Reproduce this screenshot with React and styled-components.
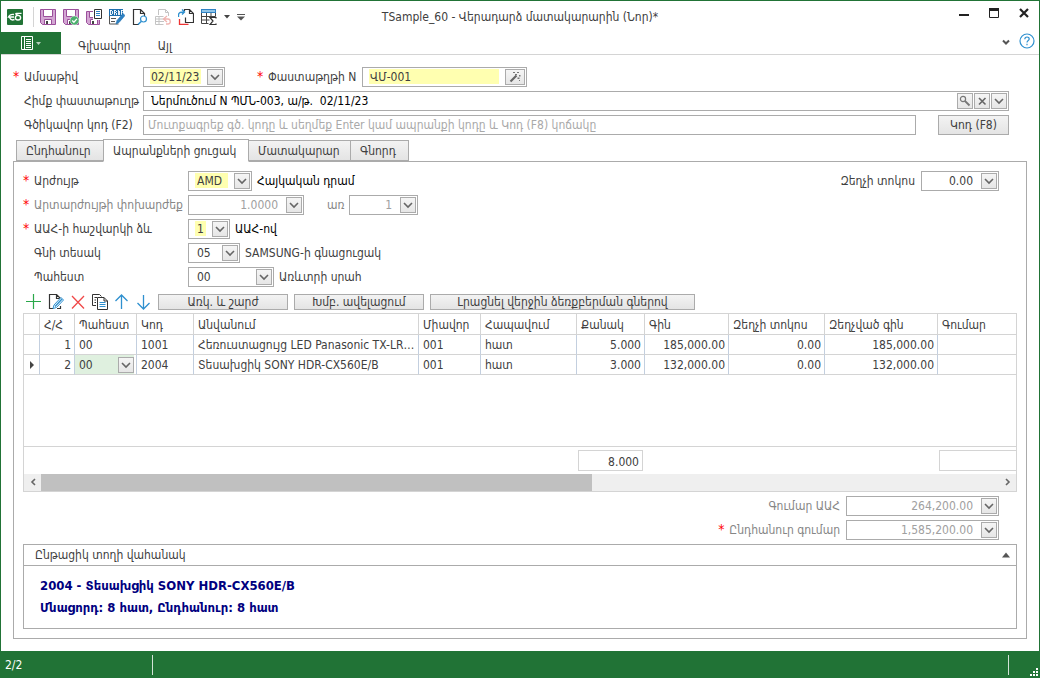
import React, { useState } from 'react';
import styled, { createGlobalStyle, css } from 'styled-components';

const GlobalStyle = createGlobalStyle`
  * {
    box-sizing: border-box;
  }
  body {
    margin: 0;
    background: #fff;
  }
  body, button, input, select, table {
    font-family: 'DejaVu Sans Condensed', 'DejaVu Sans', sans-serif;
    font-size: 12px;
    line-height: 16px;
    color: #404040;
  }
`;

const green = '#217336';
const border = '#ababab';
const line = '#d4d4d4';

// Window frame
const Window = styled.div`
  display: flex;
  flex-direction: column;
  min-height: 100vh;
  border: 1px solid ${green};
  border-bottom: 0;
`;

const TitleBar = styled.header`
  display: grid;
  grid-template-columns: 1fr auto 1fr;
  align-items: center;
  height: 31px;
`;

const QuickAccess = styled.div`
  display: flex;
  align-items: center;
  gap: 7px;
  padding-left: 6px;
`;

const Divider = styled.span`
  width: 1px;
  height: 20px;
  margin: 0 -1px 0 3px;
  background: ${line};
`;

const IconButton = styled.button`
  display: flex;
  align-items: center;
  justify-content: center;
  flex: none;
  width: ${({ $w }) => $w || 16}px;
  height: 16px;
  padding: 0;
  border: 0;
  background: none;
`;

const Title = styled.h1`
  margin: 0;
  font-size: 12px;
  font-weight: normal;
  line-height: 16px;
`;

const WindowButtons = styled.div`
  display: flex;
  justify-content: flex-end;
  gap: 14px;
  padding: 0 7px 7px 0;
`;

const Ribbon = styled.nav`
  display: flex;
  align-items: center;
  height: 23px;
  border-bottom: 1px solid ${line};
`;

const FileButton = styled.button`
  display: flex;
  align-items: center;
  justify-content: center;
  width: 60px;
  height: 22px;
  padding: 0;
  border: 0;
  background: ${green};
`;

const RibbonTab = styled.button`
  height: 22px;
  padding: 5px 0 0;
  margin-left: ${({ $gap }) => $gap}px;
  border: 0;
  background: none;
`;

const RibbonRight = styled.div`
  display: flex;
  gap: 5px;
  margin: 0 4px 4px auto;
`;

const Body = styled.main`
  display: flex;
  flex: 1;
  flex-direction: column;
  padding: 12px;
`;

// Form parts
const Rows = styled.div`
  display: flex;
  flex-direction: column;
  gap: 4px;
  padding-right: ${({ $right }) => $right || 0}px;
`;

const Row = styled.div`
  display: flex;
  align-items: center;
  justify-content: ${({ $end }) => ($end ? 'flex-end' : 'flex-start')};
  height: 20px;
`;

const Label = styled.label`
  flex: none;
  width: ${({ $w }) => ($w ? `${$w}px` : 'auto')};
  padding-left: 11px;
  white-space: nowrap;
  color: ${({ $muted }) => ($muted ? '#868686' : '#404040')};
  margin-right: ${({ $gap }) => $gap || 0}px;
  margin-left: ${({ $left }) => $left || 0}px;
  ${({ $required }) =>
    $required &&
    css`
      padding-left: 0;
      &::before {
        content: '*';
        display: inline-block;
        width: 11px;
        font-size: 14px;
        line-height: 12px;
        color: #f00;
      }
    `}
`;

const Note = styled.span`
  margin-left: 5px;
  color: ${({ $dark }) => ($dark ? '#000' : '#404040')};
  white-space: nowrap;
`;

const Spacer = styled.span`
  flex: 1;
`;

const Field = styled.span`
  display: flex;
  flex: ${({ $w }) => ($w ? 'none' : '1')};
  gap: 1px;
  width: ${({ $w }) => ($w ? `${$w}px` : 'auto')};
  height: 20px;
  padding: 1px;
  border: 1px solid ${border};
  background: #fff;
`;

const valueStyle = css`
  flex: 1;
  min-width: 0;
  height: 15px;
  margin: 0 5px 0 ${({ $plain }) => ($plain ? 2 : 5)}px;
  padding: 1px ${({ $right }) => ($right ? 2 : 0)}px 0 1px;
  border: 0;
  outline: 0;
  border-radius: 0;
  line-height: 14px;
  appearance: none;
  background: ${({ $required }) => ($required ? '#ffffb0' : 'transparent')};
  text-align: ${({ $right }) => ($right ? 'right' : 'left')};
  color: ${({ $muted, $dark }) => ($muted ? '#a0a0a0' : $dark ? '#000' : '#404040')};
  opacity: 1;
  &::placeholder {
    color: #a9a9a9;
  }
`;

const Input = styled.input`
  ${valueStyle}
`;

const Select = styled.select`
  ${valueStyle}
  padding-left: 2px;
`;

const FieldButton = styled.button`
  display: flex;
  align-items: center;
  justify-content: center;
  flex: none;
  width: ${({ $w }) => $w || 16}px;
  height: 16px;
  padding: 0;
  border: 1px solid ${border};
  background: linear-gradient(#f5f5f5, #e6e6e6);
`;

const PushButton = styled.button`
  flex: none;
  width: ${({ $w }) => $w}px;
  height: ${({ $h }) => $h || 16}px;
  margin-left: ${({ $left }) => $left || 0}px;
  padding: 0;
  border: 1px solid ${border};
  background: linear-gradient(#f3f3f3, #e4e4e4);
  line-height: 14px;
  white-space: nowrap;
`;

// Page tabs
const Tabs = styled.div`
  display: flex;
  align-items: flex-end;
  height: 23px;
  margin: 4px 0 -1px 3px;
`;

const Tab = styled.button`
  height: ${({ $active }) => ($active ? 23 : 21)}px;
  width: ${({ $w }) => $w}px;
  margin-bottom: ${({ $active }) => ($active ? 0 : 1)}px;
  margin-left: ${({ $active }) => ($active ? -1 : 0)}px;
  padding: 0 0 0 9px;
  border: 1px solid ${border};
  border-left-width: ${({ $first, $active }) => ($first || $active ? 1 : 0)}px;
  border-bottom-color: ${({ $active }) => ($active ? '#fff' : border)};
  background: ${({ $active }) => ($active ? '#fff' : 'linear-gradient(#f3f3f3, #e4e4e4)')};
  text-align: left;
  white-space: nowrap;
  z-index: 1;
`;

const Panel = styled.section`
  display: flex;
  flex: 1;
  flex-direction: column;
  padding: 9px;
  border: 1px solid ${border};
`;

const Toolbar = styled.div`
  display: flex;
  gap: 6px;
  margin: 7px 0 3px 3px;
`;

// Items grid
const Grid = styled.div`
  display: flex;
  flex: 1;
  flex-direction: column;
  min-height: 160px;
  border: 1px solid ${line};
`;

const Table = styled.table`
  width: 100%;
  table-layout: fixed;
  border-collapse: separate;
  border-spacing: 0;
`;

const Col = styled.col`
  width: ${({ $w }) => ($w ? `${$w}px` : 'auto')};
`;

const Th = styled.th`
  height: 21px;
  padding: 1px 4px 0;
  border-right: 1px solid ${line};
  border-bottom: 1px solid ${line};
  font-weight: normal;
  text-align: left;
  white-space: nowrap;
  &:last-child {
    border-right: 0;
  }
`;

const Td = styled.td`
  height: 20px;
  padding: 0 ${({ $right }) => ($right ? 3 : 2)}px 0 4px;
  border-right: 1px solid #c3cfdf;
  border-bottom: 1px solid ${line};
  text-align: ${({ $right }) => ($right ? 'right' : 'left')};
  overflow: hidden;
  text-overflow: ellipsis;
  white-space: nowrap;
  &:last-child {
    border-right: 0;
  }
`;

const EditCell = styled(Td)`
  padding: 0;
`;

const MarkerCell = styled(Td)`
  padding: 0 0 0 5px;
  & > svg {
    display: block;
  }
`;

const CellEditor = styled.div`
  display: flex;
  align-items: center;
  height: 19px;
  margin-right: 2px;
  background: #dff0df;
`;

const CellSelect = styled.select`
  flex: 1;
  min-width: 0;
  padding: 0 0 0 4px;
  border: 0;
  background: transparent;
  appearance: none;
`;

const Summary = styled.div`
  display: grid;
  grid-template-columns: 554px 65px 296px 1fr;
  align-items: start;
  height: 28px;
  margin-top: auto;
  padding-top: 3px;
  border-top: 1px solid ${line};
`;

const Total = styled.output`
  grid-column: ${({ $col }) => $col};
  height: 21px;
  padding: 3px 3px 0;
  border: 1px solid ${line};
  border-right-width: ${({ $col }) => ($col === 4 ? 0 : 1)}px;
  text-align: right;
`;

const ScrollBar = styled.div`
  display: flex;
  height: 17px;
  background: #efefef;
`;

// visible columns against the scrolled ones
const Track = styled.div`
  display: grid;
  flex: 1;
  grid-template-columns: 23fr 17fr;
`;

const Thumb = styled.div`
  background: #c0c0c0;
`;

const Totals = styled(Rows)`
  margin: 4px 0;
`;

const Group = styled.section`
  border: 1px solid ${border};
`;

const GroupHeader = styled.header`
  display: flex;
  align-items: center;
  justify-content: space-between;
  height: 21px;
  padding: 0 2px 0 11px;
  border-bottom: 1px solid ${border};
`;

const GroupBody = styled.div`
  padding: 9px 16px;
  font-size: 13px;
  font-weight: bold;
  line-height: 22px;
  color: #000080;
`;

const StatusBar = styled.footer`
  display: flex;
  align-items: center;
  justify-content: space-between;
  height: 27px;
  margin: 0 -1px;
  background: ${green};
  color: #fff;
`;

const StatusCell = styled.span`
  width: ${({ $w }) => $w}px;
  height: 20px;
  padding: 2px 5px;
  border-right: ${({ $last }) => ($last ? 0 : '1px solid #d3e3d7')};
  border-left: ${({ $last }) => ($last ? '1px solid #d3e3d7' : 0)};
`;

const Grip = styled.svg`
  display: block;
  margin: 11px 0 0 16px;
`;

// Icons
const Svg = ({ size = 16, w, h, children }) => (
  <svg
    width={w || size}
    height={h || size}
    viewBox={`0 0 ${w || size} ${h || size}`}
    fill="none"
    aria-hidden="true"
  >
    {children}
  </svg>
);

const Chevron = ({ d = 'M1 3l4 4 4-4' }) => (
  <Svg size={10}>
    <path d={d} stroke="#666" strokeWidth="1.6" />
  </Svg>
);

const Caret = () => (
  <Svg w={6} h={4}>
    <path d="M0 0h6L3 3.5z" fill="#444" />
  </Svg>
);

const Logo = () => (
  <Svg>
    <rect width="16" height="16" rx="1" fill={green} />
    <path d="M7 5.5C4.500 5 2.500 6 1.500 8h5.500M2.500 8.500c1 2.300 3 2.800 5 2" stroke="#fff" strokeWidth="1.4" />
    <ellipse cx="11" cy="8.700" rx="2.600" ry="2.300" stroke="#fff" strokeWidth="1.4" />
    <path d="M14.500 4.300H9.500c-1 0-1 1 0 1.300l2 1" stroke="#fff" strokeWidth="1.3" />
  </Svg>
);

const Floppy = ({ children }) => (
  <Svg>
    <path d="M.5.5h15v15H2.5l-2-2z" fill="#d3a6d3" stroke="#9b4f9b" />
    <path d="M3.5.5h9v7h-9z" fill="#fff" stroke="#9b4f9b" />
    <path d="M4.5 10.500h7v5h-7z" fill="#fff" stroke="#9b4f9b" />
    <path d="M6 12h2v3H6z" fill="#444" />
    {children}
  </Svg>
);

const SaveCheck = () => (
  <Floppy>
    <circle cx="11.5" cy="11.5" r="4.5" fill="#4caf6e" stroke="#fff" strokeWidth=".5" />
    <path d="M9.2 11.5l1.7 1.8 3-3.4" stroke="#fff" strokeWidth="1.3" />
  </Floppy>
);

const SaveNew = () => (
  <Svg>
    <path d="M.5 2.5h13v13h-11l-2-2z" fill="#d3a6d3" stroke="#9b4f9b" />
    <path d="M3.5 2.5h4v6h-4zM4.5 10.5h7v5h-7z" fill="#fff" stroke="#9b4f9b" />
    <path d="M6 12h2v3H6z" fill="#444" />
    <path d="M7 0h9v11H7z" fill="#fff" />
    <path d="M8.5.5h7v9h-7z" fill="#fff" stroke="#333" />
    <path d="M10 2.5h4M10 4.5h4M10 6.5h4" stroke="#2f82c3" />
  </Svg>
);

const Draft = () => (
  <Svg>
    <path d="M0 0h14v7H0z" fill="#1f6fae" />
    <path
      d="M1.5 1v5M1 1.500h2M1 5.500h2M3.500 2v3M5.500 1v5M5 1.500h2M5 3.500h2M7.500 2v1M7.500 4v2M9.500 2v4M9 1.500h1M10.500 2v4M12.500 1v5M12 1.500h2M12 3.500h1.500"
      stroke="#fff"
      strokeWidth=".9"
    />
    <path d="M.5 7v8h9M2 9.5h5M2 12.5h4" stroke="#555" />
    <path d="M8 11.5l6-7 2 2-6 7-3 1.5z" fill="#2f82c3" stroke="#1f6fae" strokeWidth=".6" />
  </Svg>
);

const Preview = () => (
  <Svg>
    <path d="M7 15.5H1.5V.5h7l4 4v3M8.5.5v4h4" stroke="#333" strokeWidth="1.2" />
    <circle cx="11.5" cy="10" r="3" fill="#fff" stroke="#2f90cf" strokeWidth="1.2" />
    <path d="M9.5 12.2L6 15.5" stroke="#2f90cf" strokeWidth="1.5" />
  </Svg>
);

const Undo = () => (
  <Svg>
    <path
      d="M3.5 6V.5h7l3 3V7M10.5.5v3h3M.5 7.5h8M.5 7.5v8h8M1 10h8M1 12.500h8M4 8v7"
      stroke="#c4c4c4"
    />
    <path d="M12 7l-3.500 3 3.500 3M9 10h4c3 0 3 5 0 5h-2" stroke="#f0b4b0" strokeWidth="1.3" />
  </Svg>
);

const Transfer = () => (
  <Svg>
    <path d="M6.5 2V.5h5l4 4v9h-8v-5M11.5.5v4h4" stroke="#333" strokeWidth="1.2" />
    <path d="M.5 8V6C.5 3.500 2 3 6 3M4 .5L6.500 3 4 5.500" stroke="#2f90cf" strokeWidth="1.4" />
    <path d="M1.500 10v5.500h9" stroke="#e33" strokeWidth="1.3" />
  </Svg>
);

const TableSum = () => (
  <Svg>
    <path d="M0 0h15v4H0z" fill="#2f82c3" />
    <path d="M1 1h13v2H1z" fill="#8fc4e8" />
    <path d="M.5 4v10.500h7M.5 7.500h14V4M.5 11h8M5.500 4v10.500M10 4v4" stroke="#444" />
    <path d="M15 9.500v-1H9l3 3.500-3 3.500h6v-1" stroke="#333" strokeWidth="1.2" />
  </Svg>
);

const Wand = () => (
  <Svg size={14}>
    <path d="M2.5 11.5l6-6" stroke="#666" strokeWidth="2.2" />
    <path
      d="M5 2h2v1H5zM9 2h2v1H9zM7 4h2v1H7zM11 5h1.500v1.500H11zM9.500 7.500h2V9h-2zM11 10h1v1h-1z"
      fill="#777"
    />
  </Svg>
);

const Search = () => (
  <Svg size={12}>
    <circle cx="4" cy="4" r="2.6" stroke="#777" strokeWidth="1.2" />
    <path d="M6 6l4.500 4.500" stroke="#777" strokeWidth="1.8" />
  </Svg>
);

const Cross = () => (
  <Svg size={10}>
    <path d="M2 2l6.500 6.500M8.500 2L2 8.500" stroke="#666" strokeWidth="1.6" />
  </Svg>
);

const Plus = () => (
  <Svg>
    <path d="M0 7.5h15M7.5 0v15" stroke="#2aa84a" strokeWidth="1.2" />
  </Svg>
);

const Edit = () => (
  <Svg>
    <path d="M5 14.5H1.5V.5h7l4 4M8.5.5v4h3M9 14.5h3.500V12" stroke="#333" strokeWidth="1.2" />
    <path d="M5 14.5l1-3.500 7-7.500 2.500 2.500-7 7.500z" fill="#fff" stroke="#2f90cf" />
    <path d="M7 12.5L14 5" stroke="#2f90cf" strokeWidth="1.4" />
  </Svg>
);

const Delete = () => (
  <Svg>
    <path d="M2 2l12 12.500M14 2L2 14.500" stroke="#f04848" strokeWidth="1.3" />
  </Svg>
);

const Copy = () => (
  <Svg>
    <path d="M4 11.5H.5V.5h7l2 2M2.5 3.500H5M2.5 6H4M2.5 8.500H4" stroke="#333" />
    <path d="M5.5 3.500H12l3.500 3.500v8.500h-10zM12 3.500V7h3.500" fill="#fff" stroke="#333" />
    <path d="M7.5 8.500h6M7.5 10.500h6M7.5 12.500h6" stroke="#2f90cf" />
  </Svg>
);

const Arrow = ({ down }) => (
  <Svg>
    <path
      d={down ? 'M7.5 1v14M1.500 9l6 6 6-6' : 'M7.5 15V1M1.500 7l6-6 6 6'}
      stroke="#2f90cf"
      strokeWidth="1.3"
    />
  </Svg>
);

const quickActions = [
  ['Գրանցել', Floppy],
  ['Գրանցել և փակել', SaveCheck],
  ['Գրանցել և նոր', SaveNew],
  ['Սևագիր', Draft],
  ['Դիտել', Preview],
  ['Հետ', Undo],
  ['Տեղափոխել', Transfer],
  ['Աղյուսակ', TableSum],
];

const tabs = [
  { name: 'Ընդհանուր', width: 88 },
  { name: 'Ապրանքների ցուցակ', width: 146 },
  { name: 'Մատակարար', width: 102 },
  { name: 'Գնորդ', width: 58 },
];

const columns = [
  { title: '', width: 16 },
  { title: 'Հ/Հ', width: 35 },
  { title: 'Պահեստ', width: 62 },
  { title: 'Կոդ', width: 57 },
  { title: 'Անվանում', width: 225 },
  { title: 'Միավոր', width: 62 },
  { title: 'Հապավում', width: 96 },
  { title: 'Քանակ', width: 68 },
  { title: 'Գին', width: 84 },
  { title: 'Զեղչի տոկոս', width: 96 },
  { title: 'Զեղչված գին', width: 113 },
  { title: 'Գումար' },
];

const items = [
  { store: '00', code: '1001', name: 'Հեռուստացույց LED Panasonic TX-LR32', unit: '001', short: 'հատ', qty: '5.000', price: '185,000.00', discount: '0.00', final: '185,000.00' },
  { store: '00', code: '2004', name: 'Տեսախցիկ SONY HDR-CX560E/B', unit: '001', short: 'հատ', qty: '3.000', price: '132,000.00', discount: '0.00', final: '132,000.00' },
];

const DropInput = ({ id, width, value, ...rest }) => (
  <Field $w={width}>
    <Input id={id} defaultValue={value} {...rest} />
    <FieldButton type="button" aria-label="Բացել">
      <Chevron />
    </FieldButton>
  </Field>
);

const DropSelect = ({ id, width, value, required }) => (
  <Field $w={width}>
    <Select id={id} $required={required} defaultValue={value}>
      <option>{value}</option>
    </Select>
    <FieldButton as="span" aria-hidden="true">
      <Chevron />
    </FieldButton>
  </Field>
);

const App = () => {
  const [activeTab, setActiveTab] = useState(1);
  const [current, setCurrent] = useState(1);

  return (
    <>
      <GlobalStyle />
      <Window>
        <TitleBar>
          <QuickAccess>
            <Logo />
            <Divider />
            {quickActions.map(([name, Icon]) => (
              <IconButton key={name} aria-label={name}>
                <Icon />
              </IconButton>
            ))}
            <IconButton $w={6} aria-label="Ավելին">
              <Caret />
            </IconButton>
            <IconButton $w={8} aria-label="Կարգավորել">
              <Svg size={8}>
                <path d="M0 1h8v1H0zM0 3.500h8L4 7.500z" fill="#555" />
              </Svg>
            </IconButton>
          </QuickAccess>
          <Title>TSample_60 - Վերադարձ մատակարարին (Նոր)*</Title>
          <WindowButtons>
            <IconButton aria-label="Ծալել">
              <Svg>
                <path d="M3 10h10" stroke="#222" strokeWidth="2" />
              </Svg>
            </IconButton>
            <IconButton aria-label="Մեծացնել">
              <Svg>
                <path d="M3.5 3.5h9v9h-9z" stroke="#222" />
                <path d="M3 3h10v3H3z" fill="#222" />
              </Svg>
            </IconButton>
            <IconButton aria-label="Փակել">
              <Svg>
                <path d="M4 4l8 8M12 4l-8 8" stroke="#222" strokeWidth="2.2" />
              </Svg>
            </IconButton>
          </WindowButtons>
        </TitleBar>
        <Ribbon>
          <FileButton aria-label="Ցանկ">
            <Svg w={20} h={14}>
              <path d="M.5.5h11v13H.5zM3.500 0v14" stroke="#fff" />
              <path d="M5 3.5h5M5 5.5h5M5 7.5h5M5 9.5h5M5 11.5h5" stroke="#fff" />
              <path d="M15 6h5l-2.500 3z" fill="#b5cfbc" />
            </Svg>
          </FileButton>
          <RibbonTab $gap={17}>Գլխավոր</RibbonTab>
          <RibbonTab $gap={27}>Այլ</RibbonTab>
          <RibbonRight>
            <IconButton aria-label="Ծալել ժապավենը">
              <Svg size={10}>
                <path d="M2 4.500l3 3 3-3" stroke="#555" strokeWidth="2" />
              </Svg>
            </IconButton>
            <IconButton aria-label="Օգնություն">
              <Svg>
                <circle cx="8" cy="8" r="7" stroke="#2f90cf" strokeWidth="1.2" />
                <path
                  d="M5.8 6.3c0-3 4.400-3 4.400-.3 0 1.500-2.200 1.500-2.200 3.500M8 10.800v1.400"
                  stroke="#2f90cf"
                  strokeWidth="1.2"
                />
              </Svg>
            </IconButton>
          </RibbonRight>
        </Ribbon>
        <Body>
          <Rows $right={18}>
            <Row>
              <Label htmlFor="date" $w={130} $required>Ամսաթիվ</Label>
              <DropInput id="date" width={82} value="02/11/23" $required />
              <Label htmlFor="number" $w={105} $left={32} $required>Փաստաթղթի N</Label>
              <Field $w={165}>
                <Input id="number" defaultValue="ՎՄ-001" $required />
                <FieldButton $w={20} aria-label="Համարակալել">
                  <Wand />
                </FieldButton>
              </Field>
            </Row>
            <Row>
              <Label htmlFor="basis" $w={130}>Հիմք փաստաթուղթ</Label>
              <Field>
                <Input id="basis" defaultValue="Ներմուծում N ՊՄՆ-003, ա/թ.  02/11/23" $dark />
                <FieldButton aria-label="Փնտրել"><Search /></FieldButton>
                <FieldButton aria-label="Մաքրել"><Cross /></FieldButton>
                <FieldButton aria-label="Բացել"><Chevron /></FieldButton>
              </Field>
            </Row>
            <Row>
              <Label htmlFor="barcode" $w={130}>Գծիկավոր կոդ (F2)</Label>
              <Field>
                <Input
                  id="barcode"
                  $plain
                  placeholder="Մուտքագրեք գծ. կոդը և սեղմեք Enter կամ ապրանքի կոդը և Կոդ (F8) կոճակը"
                />
              </Field>
              <PushButton $w={71} $h={20} $left={22}>Կոդ (F8)</PushButton>
            </Row>
          </Rows>
          <Tabs role="tablist">
            {tabs.map((tab, i) => (
              <Tab
                key={tab.name}
                role="tab"
                aria-selected={i === activeTab}
                $active={i === activeTab}
                $first={i === 0}
                $w={tab.width}
                onClick={() => setActiveTab(i)}
              >
                {tab.name}
              </Tab>
            ))}
          </Tabs>
          <Panel>
            <Rows $right={18}>
              <Row>
                <Label htmlFor="currency" $w={165} $required>Արժույթ</Label>
                <DropSelect id="currency" width={64} value="AMD" required />
                <Note $dark>Հայկական դրամ</Note>
                <Spacer />
                <Label htmlFor="discount" $gap={6}>Զեղչի տոկոս</Label>
                <DropInput id="discount" width={78} value="0.00" $right />
              </Row>
              <Row>
                <Label htmlFor="rate" $w={165} $required $muted>Արտարժույթի փոխարժեք</Label>
                <DropInput id="rate" width={116} value="1.0000" readOnly $right $muted />
                <Label htmlFor="per" $w={33} $left={12} $muted>առ</Label>
                <DropInput id="per" width={69} value="1" readOnly $right $muted />
              </Row>
              <Row>
                <Label htmlFor="vat" $w={165} $required>ԱԱՀ-ի հաշվարկի ձև</Label>
                <DropSelect id="vat" width={42} value="1" required />
                <Note $dark>ԱԱՀ-ով</Note>
              </Row>
              <Row>
                <Label htmlFor="priceType" $w={165}>Գնի տեսակ</Label>
                <DropSelect id="priceType" width={52} value="05" />
                <Note>SAMSUNG-ի գնացուցակ</Note>
              </Row>
              <Row>
                <Label htmlFor="store" $w={165}>Պահեստ</Label>
                <DropSelect id="store" width={86} value="00" />
                <Note>Առևտրի սրահ</Note>
              </Row>
            </Rows>
            <Toolbar>
              <IconButton aria-label="Ավելացնել"><Plus /></IconButton>
              <IconButton aria-label="Խմբագրել"><Edit /></IconButton>
              <IconButton aria-label="Հեռացնել"><Delete /></IconButton>
              <IconButton aria-label="Պատճենել"><Copy /></IconButton>
              <IconButton aria-label="Վերև"><Arrow /></IconButton>
              <IconButton aria-label="Ներքև"><Arrow down /></IconButton>
              <PushButton $w={130}>Առկ. և շարժ</PushButton>
              <PushButton $w={130}>Խմբ. ավելացում</PushButton>
              <PushButton $w={265}>Լրացնել վերջին ձեռքբերման գներով</PushButton>
            </Toolbar>
            <Grid>
              <Table>
                <colgroup>
                  {columns.map(col => (
                    <Col key={col.title} $w={col.width} />
                  ))}
                </colgroup>
                <thead>
                  <tr>
                    {columns.map(col => (
                      <Th key={col.title}>{col.title}</Th>
                    ))}
                  </tr>
                </thead>
                <tbody>
                  {items.map((item, i) => (
                    <tr key={item.code} onClick={() => setCurrent(i)}>
                      <MarkerCell>
                        {i === current && (
                          <Svg size={8}>
                            <path d="M1 0l4 4-4 4z" fill="#444" />
                          </Svg>
                        )}
                      </MarkerCell>
                      <Td $right>{i + 1}</Td>
                      {i === current ? (
                        <EditCell>
                          <CellEditor>
                            <CellSelect aria-label="Պահեստ" defaultValue={item.store}>
                              <option>{item.store}</option>
                            </CellSelect>
                            <FieldButton as="span" aria-hidden="true"><Chevron /></FieldButton>
                          </CellEditor>
                        </EditCell>
                      ) : (
                        <Td>{item.store}</Td>
                      )}
                      <Td>{item.code}</Td>
                      <Td>{item.name}</Td>
                      <Td>{item.unit}</Td>
                      <Td>{item.short}</Td>
                      <Td $right>{item.qty}</Td>
                      <Td $right>{item.price}</Td>
                      <Td $right>{item.discount}</Td>
                      <Td $right>{item.final}</Td>
                      <Td />
                    </tr>
                  ))}
                </tbody>
              </Table>
              <Summary>
                <Total $col={2}>8.000</Total>
                <Total $col={4} />
              </Summary>
              <ScrollBar>
                <IconButton $w={17} aria-label="Ձախ"><Chevron d="M7 2L4 5l3 3" /></IconButton>
                <Track>
                  <Thumb />
                </Track>
                <IconButton $w={17} aria-label="Աջ"><Chevron d="M3 2l3 3-3 3" /></IconButton>
              </ScrollBar>
            </Grid>
            <Totals $right={18}>
              <Row $end>
                <Label htmlFor="vatSum" $gap={6} $muted>Գումար ԱԱՀ</Label>
                <DropInput id="vatSum" width={153} value="264,200.00" readOnly $right $muted />
              </Row>
              <Row $end>
                <Label htmlFor="total" $gap={6} $required $muted>Ընդհանուր գումար</Label>
                <DropInput id="total" width={153} value="1,585,200.00" readOnly $right $muted />
              </Row>
            </Totals>
            <Group>
              <GroupHeader>
                Ընթացիկ տողի վահանակ
                <IconButton aria-label="Ծալել">
                  <Svg w={10} h={6}>
                    <path d="M1 5.5h8L5 .5z" fill="#555" />
                  </Svg>
                </IconButton>
              </GroupHeader>
              <GroupBody>
                2004 - Տեսախցիկ SONY HDR-CX560E/B
                <br />
                Մնացորդ: 8 հատ, Ընդհանուր: 8 հատ
              </GroupBody>
            </Group>
          </Panel>
        </Body>
        <StatusBar>
          <StatusCell $w={153}>2/2</StatusCell>
          <StatusCell $w={32} $last>
            <Grip width="9" height="9" viewBox="0 0 9 9" fill="#fff" aria-hidden="true">
              <path d="M6 0h2v2H6zM3 3h2v2H3zM6 3h2v2H6zM0 6h2v2H0zM3 6h2v2H3zM6 6h2v2H6z" />
            </Grip>
          </StatusCell>
        </StatusBar>
      </Window>
    </>
  );
};

export default App;
